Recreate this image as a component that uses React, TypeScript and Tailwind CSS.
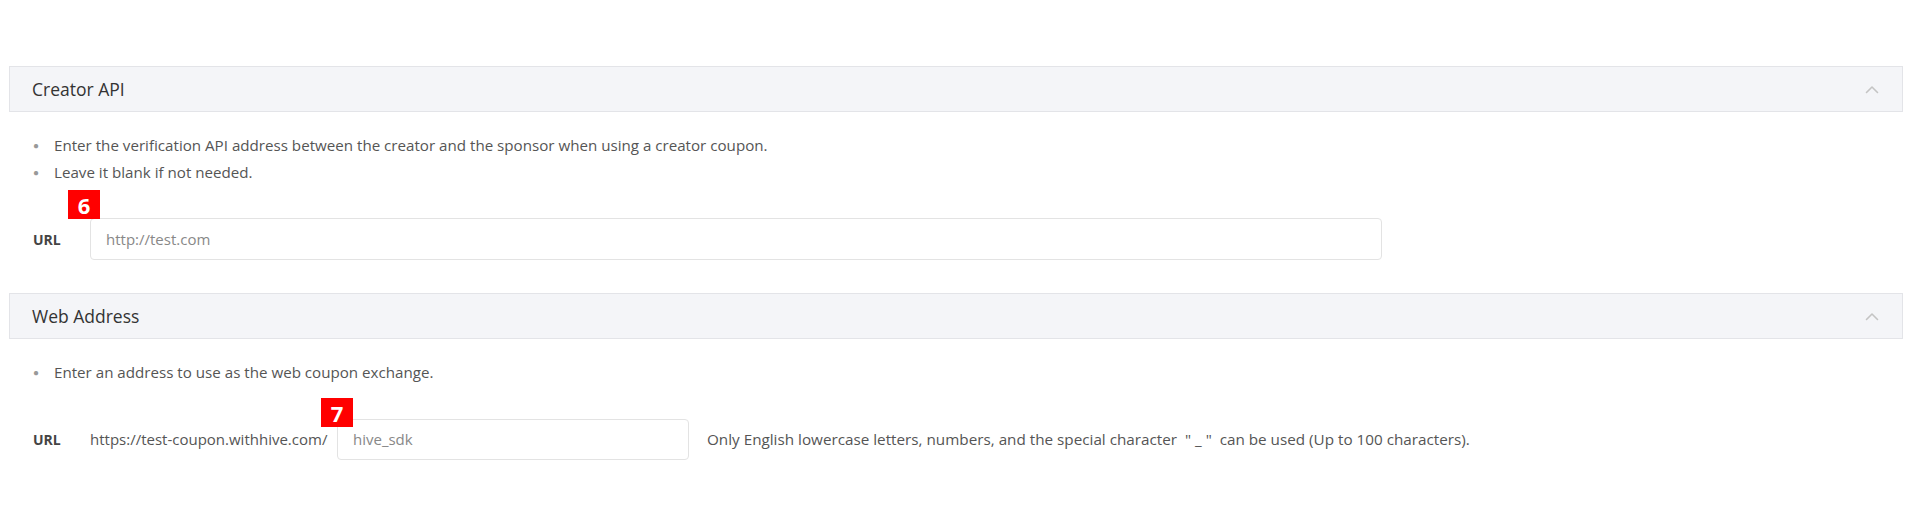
import React from "react";

function ChevronUp() {
  return (
    <svg width="14" height="9" viewBox="0 0 14 9" fill="none" className="block">
      <path d="M1.5 7.5 L7 2 L12.5 7.5" stroke="#c4c4c4" strokeWidth="1.6" strokeLinecap="round" strokeLinejoin="round" />
    </svg>
  );
}

function SectionHeader({ title }: { title: string }) {
  return (
    <div className="flex h-[46px] items-center justify-between border border-[#e3e4e8] bg-[#f4f5f8] pl-[22px] pr-[23px]">
      <span className="text-[17.5px] text-[#333]">{title}</span>
      <ChevronUp />
    </div>
  );
}

function Notes({ items }: { items: string[] }) {
  return (
    <ul className="pl-[24px]">
      {items.map((t) => (
        <li key={t} className="flex h-[27px] items-center text-[15.15px] text-[#555]">
          <span className="w-[21px] text-[10px] text-[#999]">●</span>
          <span>{t}</span>
        </li>
      ))}
    </ul>
  );
}

function Badge({ n, className }: { n: string; className: string }) {
  return (
    <span
      className={
        "absolute flex h-[29px] w-[32px] items-center justify-center bg-[#ff0000] text-[22px] font-bold leading-none text-white " +
        className
      }
    >
      {n}
    </span>
  );
}

export default function App() {
  return (
    <div
      className="min-h-[524px] bg-white px-[9px] pt-[66px]"
      style={{ fontFamily: '"Open Sans", "Noto Sans", sans-serif' }}
    >
      <section>
        <SectionHeader title="Creator API" />
        <div className="pt-[20px]">
          <Notes
            items={[
              "Enter the verification API address between the creator and the sponsor when using a creator coupon.",
              "Leave it blank if not needed.",
            ]}
          />
          <div className="mt-[32px] flex items-center pl-[24px]">
            <span className="w-[57px] text-[14px] font-bold text-[#444]">URL</span>
            <div className="relative">
              <Badge n="6" className="left-[-22px] top-[-28px]" />
              <div className="flex h-[42px] w-[1292px] items-center rounded-[4px] border border-[#e3e3e3] bg-white pl-[15px] text-[15px] text-[#888]">
                http://test.com
              </div>
            </div>
          </div>
        </div>
      </section>

      <section className="mt-[33px]">
        <SectionHeader title="Web Address" />
        <div className="pt-[20px]">
          <Notes items={["Enter an address to use as the web coupon exchange."]} />
          <div className="mt-[33px] flex items-center pl-[24px]">
            <span className="w-[57px] text-[14px] font-bold text-[#444]">URL</span>
            <span className="w-[247px] whitespace-nowrap text-[15px] text-[#555]">https://test-coupon.withhive.com/</span>
            <div className="relative">
              <Badge n="7" className="left-[-16px] top-[-21px]" />
              <div className="flex h-[41px] w-[352px] items-center rounded-[4px] border border-[#e3e3e3] bg-white pl-[15px] text-[15px] text-[#888]">
                hive_sdk
              </div>
            </div>
            <span className="ml-[18px] text-[15.25px] text-[#555]">
              Only English lowercase letters, numbers, and the special character &nbsp;" _ " &nbsp;can be used (Up to 100 characters).
            </span>
          </div>
        </div>
      </section>
    </div>
  );
}
